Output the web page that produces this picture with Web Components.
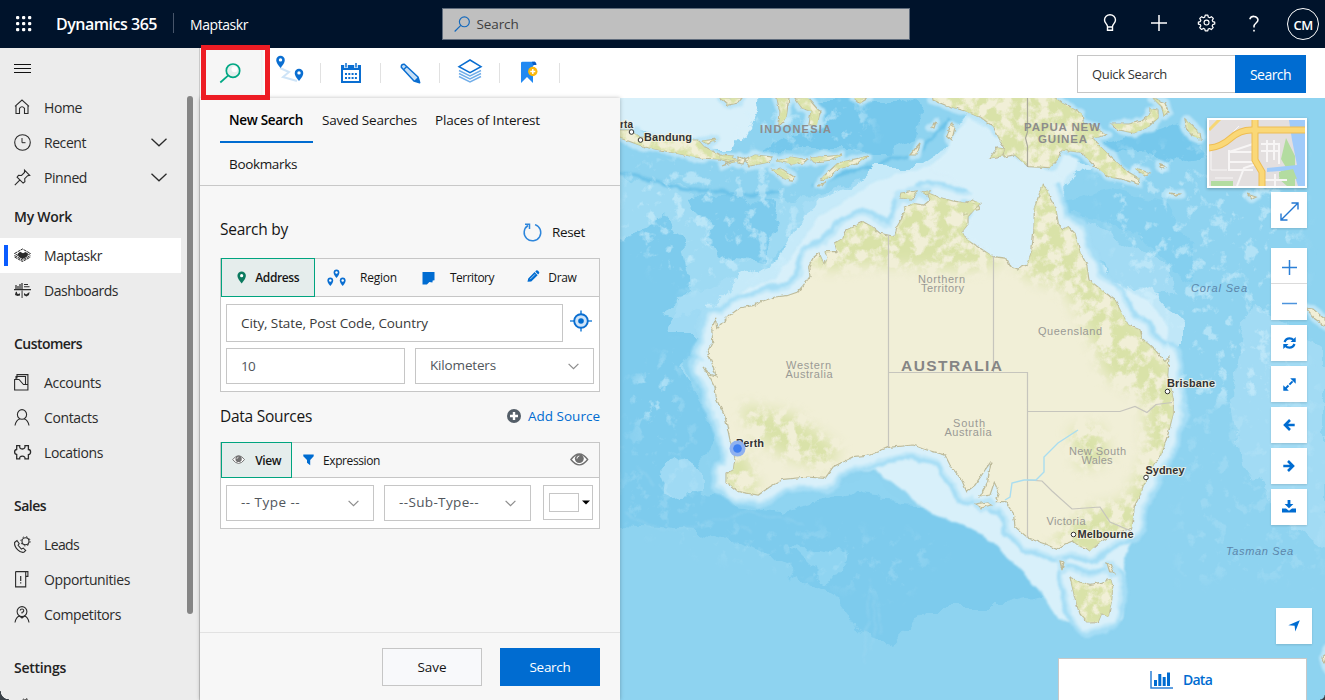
<!DOCTYPE html>
<html lang="en">
<head>
<meta charset="utf-8">
<title>Maptaskr - Dynamics 365</title>
<style>
html,body{margin:0;height:100%;overflow:hidden}
body{font-family:"Open Sans","Noto Sans",sans-serif;font-size:14px;color:#242424;background:#fff}
</style>
</head>
<body>
<app-shell></app-shell>
<script>
const define=(name,html,setup)=>{
  const tpl=document.createElement('template');
  tpl.innerHTML=html;
  customElements.define(name,class extends HTMLElement{
    constructor(){super();this.attachShadow({mode:'open'}).appendChild(tpl.content.cloneNode(true));}
    connectedCallback(){if(setup)setup(this,this.shadowRoot);}
  });
};

/* Text that tracks its letters to fill a given width (attribute w). */
define('fit-text','<style>:host{display:inline-block;white-space:pre;flex:none}span{display:inline-block}</style><span><slot></slot></span>',(el,root)=>{
  const w=+el.getAttribute('w'); if(!w)return;
  const s=root.querySelector('span'),n=el.textContent.length;
  el.style.width=w+'px';
  const d=w-s.getBoundingClientRect().width;
  s.style.letterSpacing=(d/n).toFixed(3)+'px';
});

const S='fill="none" stroke="currentColor"';
const PIN='M0 0C-4-5-5-7-5-9.500A5 5 0 0 1 5-9.500C5-7 4-5 0 0Z';
const ICONS={
waffle:[16,16,[0,1,2].map(r=>[0,1,2].map(c=>`<rect x="${c*6}" y="${r*6}" width="3.300" height="3.300" rx="1.200" fill="currentColor"/>`).join('')).join('')],
bulb:[14,18,`<path ${S} stroke-width="1.400" d="M4.500 12.500C4.500 10 1.500 9 1.500 6a5.500 5.300 0 0 1 11 0c0 3-3 4-3 6.500v3.700h-5zM4.500 13h5"/>`],
plus:[16,16,`<path ${S} stroke-width="1.500" d="M8 0v16M0 8h16"/>`],
gear:[18,18,`<path ${S} stroke-width="1.300" stroke-linejoin="round" d="M7.600 1.200h2.800l.4 2 1.500.7 1.800-1.100 2 2-1.100 1.800.6 1.400 2 .5v2l-2 .6-.7 1.500 1.100 1.800-2 2-1.800-1.100-1.500.6-.4 1.900H7.600l-.5-2-1.500-.6-1.800 1.100-2-2 1.200-1.800-.6-1.400-2-.5V8.500l2-.5.6-1.400-1.100-1.800 2-2 1.800 1.100 1.400-.6z"/><circle cx="9" cy="9" r="2.600" ${S} stroke-width="1.200"/>`],
help:[10,17,`<path ${S} stroke-width="1.500" d="M.8 4.300A4.200 4 0 0 1 9 4.800C9 8 5 8 5 11.500v1"/><rect x="4.200" y="14.800" width="1.600" height="1.700" fill="currentColor"/>`],
search:[20,20,`<circle cx="12.500" cy="7" r="6" ${S} stroke-width="1.400"/><path ${S} stroke-width="1.400" d="M8.200 11.300.8 18.700"/>`],
searchg:[22,20,`<circle cx="14" cy="7.700" r="6.700" fill="#e6efee" stroke="#00a884" stroke-width="1.700"/><circle cx="15.500" cy="6.300" r="3" fill="#fff"/><path fill="none" stroke="#00a884" stroke-width="1.700" d="M9.300 12.300 1.300 19.500"/>`],
menu:[17,12,`<path ${S} stroke-width="1" d="M0 1.500h17M0 5.500h17M0 9.500h17"/>`],
home:[16,16,`<path ${S} stroke-width="1.100" d="M1 7.300 8 1l7 6.300M2 6.500V14.500h3.500V9.300Q8 6.300 10.500 9.300V14.500H14V6.500"/>`],
clock:[17,17,`<circle cx="8.500" cy="8.500" r="7.800" ${S} stroke-width="1.100"/><path ${S} d="M8 4v4.700h3.500"/>`],
pin:[17,17,`<path ${S} stroke-width="1.100" d="m10.500 1.200 5.200 5.200-2 .3-3 3 .2 3-1.800 1.400-6-6L4.500 6.300l3 .2 3-3zM6 10.900.8 16.200"/>`],
chev:[16,9,`<path ${S} stroke-width="1.300" d="m.5.800 7.500 7 7.500-7"/>`],
chevs:[11,7,`<path ${S} stroke-width="1.200" d="m.6.800 4.900 4.900L10.400.8"/>`],
cubes:[17,15,`<path ${S} stroke-width="1" stroke-dasharray="3 .6" d="M.5 5.500 8.500 1l8 4.500-8 4.600zM.5 7.500l8 4.500 8-4.500M.5 9l8 4.500 8-4.500"/><path fill="currentColor" d="m3.500 6 2.500-2.200 3 1.400L11.500 4l2.800 1.800L12.500 9l-4 2L5 9z"/>`],
dash:[17,17,`<path fill="#777" d="M1 7V3h2v1h2V2h2V1h2v6z"/><path fill="currentColor" d="M0 7h17v1.300H0zM10 2h4v1h-4zm0 2.200h5.500v1H10zM1.500 10.500 3 9.500v2l2 .5 1-1v2.500l-2.500.5L1 13zM10 11l2 1.500L15.500 10l-.5 3-2.500 1.500L10 13.200z"/><path fill="#777" d="M7.300 8.300h1.600V16H7.300z"/>`],
accounts:[15,17,`<path ${S} stroke-width="1.100" d="M3 4.500V.6h10.900v10M2 5.500V2.500h9.500v8M.6 5.500V16h13.300v-5.500H9.500L5 5.500z"/>`],
person:[16,17,`<ellipse cx="8" cy="5.400" rx="4.600" ry="4.800" ${S} stroke-width="1.100"/><path ${S} stroke-width="1.100" d="M1 16.500q1-5.500 5-6.800M15 16.500q-1-5.500-5-6.800"/>`],
puzzle:[17,17,`<path ${S} stroke-width="1.300" d="M2.700 1.600h3q-.5 3.400 2.600 3.400T11 1.600h3.400v3.900q2.200 0 2.200 2.500t-2.200 2.600v4.300H11q.3-2.700-2.700-2.700t-2.600 2.700h-3v-4.400Q.6 10.300.6 8T2.700 5.500z"/>`],
lead:[17,17,`<path ${S} stroke-width="1.100" d="M.6 6.500 3 4.500l2.200 3.200-1.100 1.600 3.300 3.700 1.900-.9 2.400 2.300-1.900 1.900q-3 .6-6-2.500Q.2 10.500.6 6.500z"/><circle cx="11.500" cy="5.300" r="3.500" ${S} stroke-width="1.100"/><circle cx="11.500" cy="5.300" r="4.600" ${S} stroke-width="1" stroke-dasharray="1.500 2.110"/>`],
opp:[15,17,`<path ${S} stroke-width="1.100" d="M1.600.6h12.300v4.800h-2.200V.8M11.700 5v10.900H1.600V.6"/><path ${S} stroke-width="1.200" d="M6.700 5v5M6.700 11.200v1.300"/>`],
comp:[16,17,`<ellipse cx="8" cy="5.600" rx="4.900" ry="5" ${S} stroke-width="1.100"/><path ${S} stroke-width="1.100" d="M1 16.500q1-5.500 4.500-6.500L8 12l2.500-2q3.500 1 4.500 6.500M6.200 4.500Q6.300 3 8 3t1.800 1.700Q9.800 6 8 6.400v1.200"/>`],
route:[28,28,`<path fill="none" stroke="#cfe4f7" stroke-width="2" d="M5 14l9 4-6 5 14 4"/><g fill="#0a6ed1"><path transform="translate(5.500 14)scale(.85)" d="${PIN}"/><path transform="translate(24 27)scale(.85)" d="${PIN}"/></g><circle cx="5.500" cy="5.900" r="1.700" fill="#fff"/><circle cx="24" cy="18.900" r="1.700" fill="#fff"/>`],
cal:[20,20,`<rect x="1" y="3" width="18" height="16" fill="#fff" stroke="#0a6ed1" stroke-width="2"/><path fill="#0a6ed1" d="M0 2h20v5H0z"/><path stroke="#fff" stroke-width="3.600" d="M5 0v5M15 0v5"/><path stroke="#0a6ed1" stroke-width="1.500" d="M5 0v4.500M15 0v4.500"/><path stroke="#0a6ed1" stroke-width="2" stroke-dasharray="2 1.300" d="M4 11h12M4 15h12"/>`],
pencil:[21,21,`<path fill="#c4def6" stroke="#0a6ed1" stroke-width="1.500" stroke-linejoin="round" d="M1.300 4.300Q1 1 4.300 1.300L18 14l1.700 5.700L14 18z"/><path fill="none" stroke="#0a6ed1" stroke-width="1.300" d="m3.500 6.700 3.300-3.200"/><path fill="#0a6ed1" d="m14 18 4-4 2 6z"/>`],
layers:[24,24,`<path fill="none" stroke="#72aee9" stroke-width="1.400" d="m1 11.500 11 5.500 11-5.500M1 14.500 12 20l11-5.500M1 17.500 12 23l11-5.500"/><path fill="#fff" stroke="#0a6ed1" stroke-width="1.500" d="M12 1l11 6.700-11 6-11-6z"/>`],
book:[17,22,`<path fill="#2189f2" d="M0 2Q0 .8 1.500.8H14V3q-3 2-3 5l1 5v9l-6-6-6 6z"/><path fill="#0a5bc4" d="M11 .8h3q1.500.8 1.500 3.200H12z"/><circle cx="11.800" cy="10.500" r="4.700" fill="#fcb80a"/><path stroke="#fff" stroke-width="1.500" d="M11.800 8v5M9.300 10.500h5"/>`],
reset:[19,19,`<path fill="none" stroke="#2e86db" stroke-width="1.500" d="M12 1.600A8.300 8.300 0 1 1 5 2.500M2 1.300h4.500V6"/>`],
marker:[10,14,`<path fill="#0b7a5f" transform="translate(5 13.500)scale(.9)" d="${PIN}"/><circle cx="5" cy="5" r="1.700" fill="#fff"/>`],
region:[19,18,[[9.5,9],[3.3,17],[15.7,17]].map(p=>`<path fill="#0a6ed1" transform="translate(${p})scale(.58)" d="${PIN}"/><circle cx="${p[0]}" cy="${p[1]-5.500}" r="1.200" fill="#fff"/>`).join('')],
terr:[13,14,`<path fill="#006cd1" d="M.5 1h12v8.200l-1.800.2-.3 2-3-.3-2.500 2.500H.5z"/>`],
draw:[13,13,`<path fill="#006cd1" d="M.5 12.500 1.300 9 8 2.200l3.200 3.200L4.500 12zM8.700 1.500 9.700.6q.9-.8 2 .3l1 1.200q.7.8-.1 1.700l-.9.9z"/><path stroke="#fff" stroke-width=".7" d="m3.300 9.700 5.200-5.200"/>`],
target:[22,22,`<path stroke="#2c86da" stroke-width="1.600" d="M11 .5V5M11 17v4.500M0 11h5M17 11h5"/><circle cx="11" cy="11" r="6.800" fill="#cfe4f8" stroke="#0a6ed1" stroke-width="1.900"/><circle cx="11" cy="11" r="2.800" fill="#006cd1"/>`],
add:[14,14,`<circle cx="7" cy="7" r="7" fill="#545e68"/><path stroke="#fff" stroke-width="2.400" d="M7 3v8M3 7h8"/>`],
eye:[20,14,`<path fill="#fff" stroke="#707070" stroke-width="1.500" d="M1 7q9-12 18 0-9 11.500-18 0z"/><circle cx="10" cy="6" r="4.800" fill="#707070"/><path fill="none" stroke="#fff" stroke-width="1" d="M7.500 6q0-2.500 2.500-2.800"/>`],
funnel:[11,12,`<path fill="#006cd1" d="M.3.500h10.400v1.700L7.200 6v5.200L4 8.800V6L.3 2.200z"/>`],
expand:[19,19,`<path fill="none" stroke="#2478d2" stroke-width="1.400" d="M1 18 18 1M11.500 1H18v6.500M1 11.500V18h6.500"/>`],
zin:[15,15,`<path stroke="#2c80d6" stroke-width="1.500" d="M7.500 0v15M0 7.500h15"/>`],
zout:[15,15,`<path stroke="#4d94dd" stroke-width="1.500" d="M0 7.500h15"/>`],
sync:[13,12,`<path fill="none" stroke="#006cd1" stroke-width="2.200" d="M1.500 5Q3 1.300 6.500 1.300 9 1.300 10.500 3M11.500 7Q10 10.700 6.500 10.700 4 10.700 2.500 9"/><path fill="#006cd1" d="M12.700 0v5H7.500zM.3 12V7h5.200z"/>`],
diag:[13,13,`<path stroke="#006cd1" stroke-width="2" stroke-dasharray="4.500 1.300" d="M2.300 10.700 10.700 2.300"/><path fill="#006cd1" d="M12.700.3v5.500L7.200.3zM.3 12.700V7.200l5.500 5.500z"/>`],
left:[12,12,`<path fill="none" stroke="#006cd1" stroke-width="2.600" d="M11.700 6H2.500M7 1 2 6l5 5"/>`],
right:[12,12,`<path fill="none" stroke="#006cd1" stroke-width="2.600" d="M.3 6h9.200M5 1l5 5-5 5"/>`],
down:[14,13,`<path fill="#006cd1" d="M5.600 0h2.800v4h3L7 8.200 2.600 4h3zM0 8.500h4l3 2.300 3-2.300h4V12.500H0z"/>`],
nav:[12,12,`<path fill="#006cd1" d="M11.800.2 7.300 11.600 6.600 5.700.3 5.300z"/>`],
chart:[23,18,`<path fill="none" stroke="#2c80d6" stroke-width="1.500" d="M1 0v17h22"/><path fill="#006cd1" d="M4 9h3v6H4zM8.300 3h3v12h-3zM12.700 6h3v9h-3zM17 1.500h3V15h-3z"/>`],
caret:[8,5,`<path d="M0 .500h8L4 4.500z"/>`]
};
customElements.define('ui-icon',class extends HTMLElement{
  constructor(){super();this.attachShadow({mode:'open'});}
  connectedCallback(){
    const [w,h,b]=ICONS[this.getAttribute('name')],k=+(this.getAttribute('scale')||1);
    this.shadowRoot.innerHTML=`<style>:host{display:inline-block;flex:none;width:${w*k}px;height:${h*k}px}svg{display:block;overflow:visible}</style><svg width="${w*k}" height="${h*k}" viewBox="0 0 ${w} ${h}">${b}</svg>`;
  }
});

define('top-bar',`<style>
:host{display:flex;height:48px;background:#00132b;color:#fff;align-items:center;box-sizing:border-box;padding:0 6px 0 16px}
.brand{font-weight:600;font-size:16px;margin-left:24px}.sep{width:1px;height:20px;background:#47556a;margin:-2px 16px 0}
.search{box-sizing:border-box;width:468px;height:32px;background:#bfbfbf;border:1px solid #606c7c;margin-left:194px;display:flex;align-items:center;padding-left:11px;color:#3e3e3e}
.search ui-icon{color:#1469bd;margin-right:6px}
.grow{flex:1}.av{box-sizing:border-box;width:32px;height:32px;border:1px solid #fff;border-radius:50%;display:grid;place-items:center;font-weight:600;font-size:13px}
ui-icon{margin-bottom:2px}
</style>
<ui-icon name="waffle" style="margin-bottom:1px"></ui-icon><fit-text class="brand" w="101">Dynamics 365</fit-text><div class="sep"></div><fit-text w="58">Maptaskr</fit-text>
<div class="search"><ui-icon name="search" scale=".83" style="margin-bottom:0"></ui-icon><fit-text w="42" style="font-size:13.500px">Search</fit-text></div><div class="grow"></div>
<ui-icon name="bulb" style="margin-right:34px"></ui-icon><ui-icon name="plus" style="margin-right:31px"></ui-icon><ui-icon name="gear" scale=".95" style="margin-right:34px"></ui-icon><ui-icon name="help" style="margin-right:28px"></ui-icon><div class="av"><fit-text w="19" style="padding-top:2px">CM</fit-text></div>`);

define('nav-item',`<style>
:host{display:flex;height:35px;width:181px;align-items:center;box-sizing:border-box;padding-left:14px;color:#2b2b2b;position:relative}
:host([active]){background:#fff}:host([active])::before{content:"";position:absolute;left:4px;top:7px;width:4px;height:21px;background:#0a5cff}
.i{width:17px;display:grid;place-items:center start;margin-right:13px}.c{margin-left:auto;margin-right:14px;height:9px}
</style><div class="i"></div><slot></slot>`,(el,root)=>{
  root.querySelector('.i').innerHTML=`<ui-icon name="${el.getAttribute('icon')}"></ui-icon>`;
  if(el.hasAttribute('more'))root.innerHTML+='<ui-icon class="c" name="chev"></ui-icon>';
});
define('nav-group',`<style>
:host{display:block}:host(:not([first])){margin-top:14.500px}
.h{height:42.500px;display:flex;align-items:center;padding-left:14px;font-weight:600;color:#222}
:host([first]) .h{height:43.500px}
</style><div class="h"><slot name="title"></slot></div><slot></slot>`);
define('side-nav',`<style>
:host{display:block;width:200px;box-sizing:border-box;background:#ececec;border-right:1px solid #c9c9c9;position:relative;overflow:hidden;height:652px}
.m{height:41.500px;display:flex;align-items:center;padding-left:14px;color:#111}
.bar{position:absolute;left:187px;top:48px;width:6px;height:518px;border-radius:3px;background:#858585}
.corner{position:absolute;left:0;bottom:0;width:9px;height:9px;background:radial-gradient(circle at 100% 0,transparent 8px,#3b4248 8.600px)}
</style>
<div class="m"><ui-icon name="menu"></ui-icon></div>
<nav-item icon="home"><fit-text w="38">Home</fit-text></nav-item>
<nav-item icon="clock" more><fit-text w="42">Recent</fit-text></nav-item>
<nav-item icon="pin" more><fit-text w="43">Pinned</fit-text></nav-item>
<nav-group first><fit-text slot="title" w="58">My Work</fit-text>
<nav-item icon="cubes" active><fit-text w="58">Maptaskr</fit-text></nav-item>
<nav-item icon="dash"><fit-text w="74">Dashboards</fit-text></nav-item></nav-group>
<nav-group><fit-text slot="title" w="68">Customers</fit-text>
<nav-item icon="accounts"><fit-text w="57">Accounts</fit-text></nav-item>
<nav-item icon="person"><fit-text w="54">Contacts</fit-text></nav-item>
<nav-item icon="puzzle"><fit-text w="59">Locations</fit-text></nav-item></nav-group>
<nav-group><fit-text slot="title" w="32">Sales</fit-text>
<nav-item icon="lead"><fit-text w="35">Leads</fit-text></nav-item>
<nav-item icon="opp"><fit-text w="86">Opportunities</fit-text></nav-item>
<nav-item icon="comp"><fit-text w="77">Competitors</fit-text></nav-item></nav-group>
<nav-group><fit-text slot="title" w="52">Settings</fit-text><nav-item icon="lead"></nav-item></nav-group>
<div class="bar"></div><div class="corner"></div>`);

define('tool-bar',`<style>
:host{display:flex;height:50px;background:#fff;align-items:center;position:relative}
.t{width:60px;height:20px;box-sizing:border-box;border-right:1px solid #e1e1e1;display:grid;place-items:center}
.t.on{width:61px;height:50px;background:#f6f6f6;border:0;box-shadow:2px 0 3px #0001}
.grow{flex:1}.q{box-sizing:border-box;width:158px;height:38px;border:1px solid #c6c6c6;border-right:0;display:flex;align-items:center;padding-left:14px;font-size:13px;color:#333}
.b{width:71px;height:38px;background:#006cd1;color:#fff;display:grid;place-items:center;margin-right:19px}
.q,.b{margin-top:2px}
</style>
<div class="t on"><ui-icon name="searchg" style="margin-left:-1px"></ui-icon></div>
<div class="t"><ui-icon name="route" style="margin:-11px 4px 0 0"></ui-icon></div><div class="t"><ui-icon name="cal"></ui-icon></div><div class="t" style="width:59px"><ui-icon name="pencil"></ui-icon></div><div class="t"><ui-icon name="layers" style="margin-top:-4px"></ui-icon></div><div class="t"><ui-icon name="book" style="margin-top:-2px"></ui-icon></div>
<div class="grow"></div><div class="q"><fit-text w="75">Quick Search</fit-text></div><div class="b"><fit-text w="41">Search</fit-text></div>`);

define('select-box',`<style>:host{display:flex;box-sizing:border-box;height:36px;border:1px solid #c6c6c6;background:#fff;align-items:center;justify-content:space-between;padding:0 14px;color:#51565c}
ui-icon{color:#8d8d8d}::slotted(*){margin-top:-2px}</style><slot></slot><ui-icon name="chevs"></ui-icon>`);
define('search-panel',`<style>
:host{display:flex;flex-direction:column;width:420px;height:602px;background:#f7f7f7;color:#151515;box-sizing:border-box;position:relative;z-index:1;box-shadow:0 0 4px #0004}
.tabs{height:88px;box-sizing:border-box;border-bottom:1px solid #c8c8c8;padding-left:20px;display:grid;grid-template-columns:93px 114px 1fr;grid-template-rows:45px 42px;flex:none;font-size:13.500px}
.tab{display:flex;align-items:center;padding-left:9px;box-sizing:border-box}.tab.on{border-bottom:2px solid #006cd1;font-weight:600;color:#000}
.tab.up{padding-bottom:2px}
.body{padding:0 20px;flex:1}
.head{display:flex;align-items:center;font-size:15.500px;justify-content:space-between}
.sm{font-size:13.500px;display:flex;align-items:center}
.card{border:1px solid #c6c6c6;background:#fff;box-sizing:border-box}
.strip{display:flex;background:#f7f7f7;border-bottom:1px solid #c6c6c6;align-items:center;font-size:12px;box-sizing:border-box}
.sel{box-sizing:border-box;border:1px solid #00a47f;background:#e5edec;display:flex;align-items:center;font-weight:600;align-self:flex-start;margin-top:-1px}
.row{display:flex;padding-left:5px}
.in{box-sizing:border-box;border:1px solid #c6c6c6;display:flex;align-items:center;padding-left:14px;background:#fff}
.sw{box-sizing:border-box;width:50px;height:35px;border:1px solid #c6c6c6;display:flex;align-items:center;padding-left:5px;gap:3px;margin-left:12px}.sw i{box-sizing:border-box;width:30px;height:19px;border:1px solid #c6c6c6}
.foot{height:68px;box-sizing:border-box;border-top:1px solid #e2e2e2;display:flex;justify-content:flex-end;padding:15px 20px 0;gap:18px}
.btn{width:100px;height:38px;box-sizing:border-box;border:1px solid #c6c6c6;background:#f8f9fb;display:grid;place-items:center;font-size:13.500px}.btn.p{background:#006cd1;border:0;color:#fff}
</style>
<div class="tabs"><div class="tab on"><fit-text w="74">New Search</fit-text></div><div class="tab up"><fit-text w="95">Saved Searches</fit-text></div><div class="tab up" style="padding-left:8px"><fit-text w="105">Places of Interest</fit-text></div><div class="tab"><fit-text w="68">Bookmarks</fit-text></div></div>
<div class="body">
<div class="head" style="height:72px"><fit-text w="68" style="margin-top:13px">Search by</fit-text><div class="sm" style="margin:20px 15px 0 0"><ui-icon name="reset" style="margin-right:10px"></ui-icon><fit-text w="33">Reset</fit-text></div></div>
<div class="card" style="height:134px">
 <div class="strip" style="height:38px"><div class="sel" style="width:94px;height:39px;padding-left:15px"><ui-icon name="marker" style="margin-right:9px" scale=".93"></ui-icon><fit-text w="44">Address</fit-text></div>
 <ui-icon name="region" style="margin:0 14px 0 12px"></ui-icon><fit-text w="37">Region</fit-text><ui-icon name="terr" style="margin:0 15px 0 25px"></ui-icon><fit-text w="44">Territory</fit-text><ui-icon name="draw" style="margin:-3px 9px 0 33px" scale=".95"></ui-icon><fit-text w="28" style="margin-top:-1px">Draw</fit-text></div>
 <div class="row" style="padding-top:7px"><div class="in" style="width:337px;height:38px"><fit-text w="187" style="font-size:13.500px;color:#3a3a3a">City, State, Post Code, Country</fit-text></div><ui-icon name="target" style="margin:6px 0 0 7px"></ui-icon></div>
 <div class="row" style="padding-top:6px"><div class="in" style="width:179px;height:36px;margin-right:10px;color:#51565c"><fit-text w="14" style="font-size:13.500px">10</fit-text></div><select-box style="width:179px"><fit-text w="66" style="font-size:13.500px">Kilometers</fit-text></select-box></div>
</div>
<div class="head" style="height:50px"><fit-text w="92" style="margin-top:-3px">Data Sources</fit-text><div class="sm" style="color:#006cd1;margin-top:-2px"><ui-icon name="add" style="margin-right:7px"></ui-icon><fit-text w="72">Add Source</fit-text></div></div>
<div class="card" style="height:87px">
 <div class="strip" style="height:35px"><div class="sel" style="width:71px;height:36px;padding-left:10px"><ui-icon name="eye" scale=".66" style="margin-right:10px"></ui-icon><fit-text w="26">View</fit-text></div><ui-icon name="funnel" style="margin:0 9px 0 11px"></ui-icon><fit-text w="57">Expression</fit-text><ui-icon name="eye" scale=".93" style="margin:0 10px 0 auto"></ui-icon></div>
 <div class="row" style="padding-top:7px"><select-box style="width:148px;margin-right:10px"><fit-text w="59" style="font-size:13.500px">-- Type --</fit-text></select-box><select-box style="width:147px"><fit-text w="80" style="font-size:13.500px">--Sub-Type--</fit-text></select-box><div class="sw"><i></i><ui-icon name="caret"></ui-icon></div></div>
</div>
</div>
<div class="foot"><div class="btn"><fit-text w="29">Save</fit-text></div><div class="btn p"><fit-text w="41">Search</fit-text></div></div>`);

/* Base map: coastlines, bathymetry and labels share the window's coordinate space. */
const AUS='M716.700 328.300L720 325 730 315 740 307.700 753 305.700 763 301 775 297 787 295.700 797 292.300 803 285.700 810 276.700 808.700 266.700 813 258 819 253 824 264 827 258.300 825 251.700 837 251.700 835 243.300 843 238.300 846.700 230 853 226.700 863 221.700 872 226.700 880 233.300 895 236.700 897 226.700 902 218.300 905 208.300 913 203.300 924 205 930 200 928 193 940 197.700 953 201 967 203.300 972 200 980 203.300 968 216.700 968 224 962 231.700 965 237.700 978 246.700 993 256.700 1006.700 258.300 1010 265.700 1018 269 1026.700 265 1031.700 251.700 1034 228 1034.300 208.300 1039 195 1042.300 184.300 1047.700 190 1050 198.300 1055.700 208.300 1058.300 223.300 1062.300 230 1068.300 226.700 1075 233.300 1080 251.700 1086.700 265 1089 280 1101.700 290 1115 300 1121.700 313.300 1128.300 325 1140 330 1141.700 338.300 1155 350 1165 361.700 1169 356.700 1167.700 375 1171.700 391.700 1173.300 400 1173.300 413.300 1168.300 433.300 1161.700 453.300 1153.300 465 1146.700 478.300 1140 495 1134.300 506.700 1131.700 528.300 1115 533.300 1098.300 543.300 1090 551 1086 548 1080 546.700 1073 541 1065 544 1056.700 549.300 1045 544 1028.300 538.300 1015 526.700 1013.300 513.300 1005 501.700 996 501.700 999.300 493.300 994.300 482.300 990 495 980 496.700 987.700 481.700 991 461.700 985 470 975 485 966.700 491.700 961.700 480 950 465 945 455 927 450 913.300 445 888.300 447.300 870 455 853.300 456.700 833.300 466.700 825 478.300 806.700 477 783.300 479.300 770 486.700 758.300 495 738.300 491.700 726 481.700 726 474 733.300 470 735 458.300 730 440 725 416.700 716.700 400 715 388.300 710 378 703 367 710 374 716 376 712 363 707.300 351.700 712.700 341.700 711.700 328.300 715.700 319Z';
const TAS='M1070 577.300L1080 582.300 1090 584.300 1101.700 582.300 1110.700 579.300 1112.700 586.700 1111.700 600 1108.300 616.700 1101.700 613.300 1098.300 621.700 1086.700 622 1080 614 1075 598Z';
const PNG='M931.700 90L933 100 945 105 965 111 982 118.300 993.300 126.700 1000 140 1005 148.300 1002 156 990 158 997 148 1005 149 1003 157 1015 155 1028.300 166.700 1050 167.700 1057 160 1061.700 150 1081.700 152.300 1091.700 163.300 1108.300 176.700 1125 180 1138.300 184.300 1139 178.300 1125 170 1112 158.300 1097 143.300 1093 138 1106.700 135 1095 126.700 1083.300 121.700 1081.700 113.300 1062 103.300 1045 90Z';
const ISL='M610 130H630L640 137 670 140 698 140 704 147 720 155 740 160 722 166 735 160 700 158 670 152 645 147 620 138ZM702 141l14-2-8 5zM721 155l12 1-4 6-9-3zM738 156l7 3-2 5-5-1zM745 160l10-5 18 2-4 5-20 4zM776 161l15-4 17 3-4 3-12 1zM810 158l32-3-10 5-18 2zM772 170l10-1 12 8-2 3-7-1zM824 176l14-13 30-7-12 8-18 5-11 10-6 1zM817 186l7-3-2 3zM720 98l8 7 10-2 4-5zM777 98h12l-3 20-7 7 1-12zM795 98h13l12 14-3 13-8 0 2-14-9-3zM854 98h14l-8 5zM910 155l10-12-3 12zM947 136l4-12 4 3-3 13zM931 127l5-5-2 6zM901 193l16-2-5 8-12-1zM922 192l8-1-3 4zM964 203l14 1 2 5-8 2-8 4zM1112 124l17 0 13-3 8-7 0-5 8 1 0 8-10 9-14 6-16-3zM1185 119l15 14 1 6-9-3-6-9zM1153 98l12 5 3 9-4 4-2-9zM1160 164l6 3-4 2zM1135 168l14 5-4 3zM1170 193l10 1-4 2zM1247 194l9 3-4 2zM1306 308l7 1 14 12v6l-12-8zM976 504l12-2 3 3-11 3zM1060 561l4 1-2 8zM1107 563l3 1 4 9-4 0zM1323 658l5-8v20z';
const ALL=AUS+TAS+PNG+ISL;
const lab=(x,y,w,t,size,fill,extra='')=>`<text x="${x}" y="${y}" textLength="${w}" font-size="${size}" fill="${fill}" ${extra}>${t}</text>`;
const B='font-weight="bold"',H='stroke="#f6f3e2" stroke-width="2" stroke-opacity=".8" paint-order="stroke" font-weight="bold"';
const C='color-interpolation-filters="sRGB"';
define('base-map',`<style>:host{display:block;width:705px;height:602px}svg{display:block;font-family:"Liberation Sans",Arial,sans-serif}</style>
<svg width="705" height="602" viewBox="620 98 705 602">
<defs>
<filter id="rough" ${C} x="-5%" y="-5%" width="110%" height="110%"><feTurbulence type="fractalNoise" baseFrequency=".035" numOctaves="5" seed="7"/><feDisplacementMap in="SourceGraphic" scale="22" xChannelSelector="R" yChannelSelector="G"/><feGaussianBlur stdDeviation=".7"/></filter>
<filter id="shelf" ${C} x="-5%" y="-5%" width="110%" height="110%"><feTurbulence type="fractalNoise" baseFrequency=".05" numOctaves="3" seed="3"/><feDisplacementMap in="SourceGraphic" scale="9" xChannelSelector="R" yChannelSelector="G"/><feGaussianBlur stdDeviation="1.200"/></filter>
<filter id="coast" ${C}><feTurbulence type="fractalNoise" baseFrequency=".2" numOctaves="2" seed="2"/><feDisplacementMap in="SourceGraphic" scale="3.500" xChannelSelector="R" yChannelSelector="G"/></filter>
<filter id="veg" ${C} filterUnits="userSpaceOnUse" x="620" y="98" width="705" height="602"><feGaussianBlur in="SourceAlpha" stdDeviation="7" result="b"/><feTurbulence type="fractalNoise" baseFrequency=".08" numOctaves="5" seed="9"/><feColorMatrix values="0 0 0 0 .85 0 0 0 0 .885 0 0 0 0 .66 5 0 0 0 -1.900"/><feComposite operator="in" in2="b"/></filter>
<filter id="sea" ${C} filterUnits="userSpaceOnUse" x="620" y="98" width="705" height="602"><feGaussianBlur in="SourceAlpha" stdDeviation="8" result="b"/><feTurbulence type="fractalNoise" baseFrequency=".07" numOctaves="5" seed="4"/><feColorMatrix values="0 0 0 0 .82 0 0 0 0 .94 0 0 0 0 .99 7 0 0 0 -4"/><feComposite operator="in" in2="b"/></filter>
<clipPath id="land"><path d="${ALL}"/></clipPath>
</defs>
<rect x="620" y="98" width="705" height="602" fill="#8ed3f0"/>
<g filter="url(#rough)">
<path fill="#9edaf3" d="M600 170L700 195 790 200 830 190 800 240 770 260 780 290 700 320 680 345 690 400 640 300 600 260Z"/>
<g fill="#7dcbed"><path d="M600 260L650 225 665 215 680 240 690 290 660 310 705 318 690 350 680 370 715 430 700 455 705 495 735 505 780 510 850 495 900 500 970 510 1005 520 1045 560 1060 590 1000 605 930 605 890 650 865 640 830 590 740 545 700 530 600 525ZM660 215L700 195 770 198 780 205 770 240 760 262 720 255 705 240 715 225 690 200Z"/></g>
<path fill="#8fd4f1" d="M735 505l45 5 70-15 60 5-40-20-60 0-60 5zM790 545l60 10-20 30z"/>
<path fill="#84cfef" d="M1062 200L1110 190 1170 205 1190 240 1195 280 1170 270 1140 230 1100 220 1065 215Z"/>
</g>
<path filter="url(#shelf)" fill="none" stroke="#6cc2e8" stroke-width="3" d="M600 165Q650 182 700 190T780 191M810 187 850 172 920 152 950 118"/>
<path filter="url(#rough)" fill="#76c8ec" d="M800 98H895L922 110 918 140 890 150 800 150 765 148 790 135 830 125ZM1100 145l40-12 30-10 25 20 15 15-30 3-30-10-50 5z"/>
<g filter="url(#rough)">
<g fill="#a7ddf5"><path d="M655 470l30-10 20 10 0 20-40 4zM680 295l90-20 40-30-10-40 60-30-20 90-80 40-50 30-40 0zM1085 220l40 20 35 20 15 30-25 15-30-15-30-30zM1250 300l75 50v200l-30-20-55-70-10-60z" opacity=".8"/></g>
<path d="M600 90H765L755 110 745 130 735 150 710 150 690 140 600 125Z" fill="#d8f0fa"/>
<path fill="#c6eaf9" d="M716 335L708 310 745 275 780 260 800 225 815 200 850 185 880 165 920 165 950 145 968 105 1000 130 1020 160 1060 155 1090 165 1067 185 1062 205 1066 215 1080 235 1090 265 1110 280 1155 305 1172 320 1172 345 1160 360 1100 320Z"/>
<path fill="#c0e7f8" d="M1130 285l35 15 20 25 0 20-15 10-15-20-30-30zM735 465l120-20 40-10 70 25 45 70-50-30-90-35-90 25-60 10z"/>
</g>
<g filter="url(#shelf)">
<path fill="#d8f0fa" d="M720 335L718 315 745 287 775 280 800 245 820 215 850 200 880 180 920 170 950 155 962 125 1000 130 1020 160 1060 153 1080 160 1065 180 1060 200 1062 215 1075 230 1085 265 1110 284 1150 300 1168 325 1165 345 1155 355 1100 320 1060 260 1020 275 980 265 950 230 900 240 850 250 800 290Z"/>
<path fill="#d8f0fa" d="M825 480l20-20 60-18 45 10 50 55 40 35 50 13 45-25-12 35 0 55-20 4-45-5-20-30-25-25-30-30-50-20-60-45-30-2z"/>
</g>
<g filter="url(#shelf)" fill="none" stroke-linejoin="round"><path stroke="#a6ddf5" stroke-width="28" d="${AUS+TAS}"/><path stroke="#c2e8f8" stroke-width="20" d="${AUS+TAS}"/><path stroke="#d9f0fa" stroke-width="14" d="${AUS+TAS}"/><path stroke="#bce5f7" stroke-width="8" d="${PNG+ISL}"/></g>
<path filter="url(#shelf)" fill="#d8f0fa" d="M968 118l34 22 18 22 35 8 8 10-24 12-5 30-3 34-12 10-22-10-32-22 8-22 0-20-40-25z"/>
<path filter="url(#sea)" opacity=".55" d="M630 160H800V260L690 290 620 240ZM680 345l-20 100-30-60zM1090 150H1300V400H1190L1130 300ZM750 105h120v40h-120z"/>
<path filter="url(#sea)" opacity=".2" d="M630 380H700V520L950 540 900 600 700 550 620 520ZM1180 380h140v200h-140z"/>
<g filter="url(#coast)"><path d="${ALL}" fill="#f1efd7" stroke="#bebb9b" stroke-width="1.200"/></g>
<g clip-path="url(#land)"><path filter="url(#veg)" fill="#000" d="M805 260L850 215 900 190 990 190 1000 265 960 270 900 265 860 265 830 270ZM1020 275L1035 170 1070 215 1095 275 1130 310 1180 380 1180 440 1135 540 1090 560 1050 545 1085 510 1125 500 1145 460 1145 400 1105 375 1090 335 1065 290ZM1065 570h60v60h-60zM740 405l55 10 45 35-15 20-45-15-30-25zM727 455l18-5 15 45-35-5zM925 80h220v120h-140zM620 90h260v100h-260zM1070 430l30-5 10 35-30 10zM1110 90h100v60h-100z"/></g>
<g fill="none" stroke="#c6c5bd" stroke-width="1.200"><path d="M888.500 235V447M888.500 372.500H1027.500V538M993.500 256V372M1027.500 411.500H1120l15-5 12 6 9-8 16-2M1027 480l15 1 10 10 20 18 28-2 10 15 21 9"/><path d="M1027.500 98v34l-2 6 2 8v21" stroke="#aaa99b"/></g>
<path fill="none" stroke="#a9ddf0" stroke-width="1.400" d="M1078 430l-20 13-14 14 0 15-8 8-12 0-12 3-2 14-5 3"/>
<path fill="none" stroke="#a9dcf3" stroke-width="1.200" opacity=".4" filter="url(#shelf)" d="M870 580l-5 85m10-65l-2 50m7-48l-1 30M623 510q20 17 45 17t60-10 75 8M635 465l20 20M740 525l10 8"/>
<g>
${lab(620,128,13,'rta',10,'#333',H)}${lab(644,140.500,48,'Bandung',11,'#333',H)}
${lab(760,133,71,'INDONESIA',11,'#8c8c8c',B)}
${lab(1024,131,76,'PAPUA NEW',11.500,'#8c8c8c',B)}${lab(1038,142.500,49,'GUINEA',11.500,'#8c8c8c',B)}
${lab(918,282.500,47,'Northern',11,'#9a9a95')}${lab(921,291.500,43,'Territory',11,'#9a9a95')}
${lab(786,369,45,'Western',11,'#9a9a95')}${lab(785.500,378,47,'Australia',11,'#9a9a95')}
${lab(901,371,101,'AUSTRALIA',15.5,'#858585',B)}
${lab(1038,335,64,'Queensland',11,'#9a9a95')}
${lab(953,427,32,'South',11,'#9a9a95')}${lab(944.500,436,47,'Australia',11,'#9a9a95')}
${lab(1069,454.500,57,'New South',11,'#9a9a95')}${lab(1081.500,464,31,'Wales',11,'#9a9a95')}
${lab(1046.500,525,39,'Victoria',11,'#9a9a95')}
${lab(1191,292,56,'Coral Sea',11,'#5c86aa','font-style="italic"')}${lab(1226,554.500,67,'Tasman Sea',11,'#5c86aa','font-style="italic"')}
${lab(1167,387,48,'Brisbane',11,'#333',H)}${lab(1145.500,474,39,'Sydney',11,'#333',H)}${lab(1077.500,538,56,'Melbourne',11,'#333',H)}${lab(736,447,28,'Perth',11,'#333',H)}
<g fill="#fff" stroke="#333"><circle cx="631.500" cy="132" r="2.300"/><circle cx="640.500" cy="140" r="2.300"/><circle cx="1167.500" cy="391.500" r="2.300"/><circle cx="1146" cy="477.500" r="2.300"/><circle cx="1073.500" cy="534.500" r="2.300"/></g>
<circle cx="737.500" cy="448.500" r="8" fill="#8fb1ef"/><circle cx="737.500" cy="448.500" r="4.300" fill="#3f7ff0"/></g>
</svg>`);

define('map-thumb',`<style>:host{display:block;box-sizing:border-box;width:100px;height:70px;border:2px solid #fff;box-shadow:0 1px 3px #0004;overflow:hidden}svg{display:block}</style>
<svg width="96" height="66"><rect width="96" height="66" fill="#e3dfdf"/><path fill="#b3dca0" d="M77 18l9 18v30h-8l-8-7 2-8 6-2-6-10z"/><path fill="#a0cbfa" d="M80 0h16v66h-7L84 50l-26 2v-4l30-3-5-25z"/><path fill="#b3dca0" d="M2 61h22v5H2zM70 52l14-3 4 10-18-2z"/>
<g stroke="#f7f5f5" stroke-width="2" fill="none"><path d="M20 32h24M20 42h24M20 30v20h24M52 24h18v20M52 31h18M58 20v22M65 20v20M28 66l7-18 12-4M56 60h22M66 54v12M20 32l24-8"/><path stroke-width="1" d="M12 24 30 6M2 30v20h16M6 58h18"/></g>
<g fill="none"><path stroke="#eebd54" stroke-width="7" d="M0 28Q12 27 22 18T45 10h51M46 0v40l7 12v16"/><path stroke="#fad877" stroke-width="5" d="M0 28Q12 27 22 18T45 10h51M46 0v40l7 12v16"/><path stroke="#f6d775" stroke-width="3" d="M0 10 11-1"/></g></svg>`);
define('map-button',`<style>:host{display:grid;place-items:center;width:36px;height:36px;background:#fff;box-shadow:0 1px 2px #0002}</style><slot></slot>`);
define('map-view',`<style>
:host{display:block;flex:1;height:602px;position:relative;overflow:hidden}
.ctl{position:absolute;right:18px;top:20px;display:flex;flex-direction:column;align-items:flex-end;gap:5px}
.zoom{display:grid;margin:15px 0 0}.zoom map-button:first-child{height:35px;border-bottom:1px solid #ddd}
.loc{position:absolute;right:13px;top:510px}
.data{position:absolute;right:18px;bottom:0;width:249px;height:42px;box-sizing:border-box;border:1px solid #c8c8c8;border-bottom:0;background:#fff;display:flex;align-items:center;justify-content:center;gap:10px;color:#006cd1;font-weight:600;font-size:14px;padding-right:3px}
.c{position:absolute;right:0;bottom:0;width:5px;height:5px;background:radial-gradient(circle at 0 0,transparent 4px,#3b4248 5px)}
</style><base-map></base-map>
<div class="ctl"><map-thumb></map-thumb><map-button style="margin-top:-1px"><ui-icon name="expand" style="margin-top:3px"></ui-icon></map-button>
<div class="zoom"><map-button><ui-icon name="zin" style="margin-top:4px"></ui-icon></map-button><map-button><ui-icon name="zout" style="margin-top:2px"></ui-icon></map-button></div>
<map-button><ui-icon name="sync"></ui-icon></map-button><map-button><ui-icon name="diag"></ui-icon></map-button><map-button><ui-icon name="left"></ui-icon></map-button><map-button><ui-icon name="right"></ui-icon></map-button><map-button><ui-icon name="down" style="margin-top:-2px"></ui-icon></map-button></div>
<map-button class="loc"><ui-icon name="nav"></ui-icon></map-button>
<div class="data"><ui-icon name="chart"></ui-icon><fit-text w="29">Data</fit-text></div><div class="c"></div>`);

define('app-shell',`<style>
:host{display:block;width:1325px;height:700px;position:relative;overflow:hidden}
.m{display:flex}.w{flex:1;min-width:0}.r{display:flex}
.mark{position:absolute;left:201px;top:45px;width:69px;height:55px;box-sizing:border-box;border:5px solid #ed1c24;z-index:3}
</style><top-bar></top-bar><div class="m"><side-nav></side-nav><div class="w"><tool-bar></tool-bar><div class="r"><search-panel></search-panel><map-view></map-view></div></div></div><div class="mark"></div>`);
</script>
</body>
</html>
